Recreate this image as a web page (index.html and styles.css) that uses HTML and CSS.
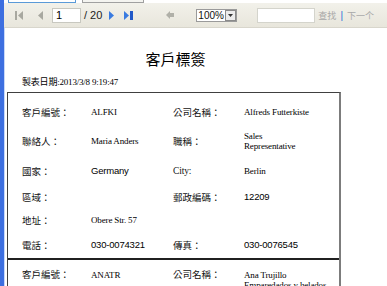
FILE: index.html
```html
<!DOCTYPE html>
<html lang="zh-TW">
<head>
    <meta charset="UTF-8">
    <title>客戶標簽</title>
    <link rel="stylesheet" href="styles.css">
</head>
<body>
    <div class="frame">
        <div class="tabs">
            <div class="tab tab-active"></div>
            <div class="tab"></div>
        </div>
        <div class="toolbar">
            <svg class="tb-icon first" width="8" height="9" viewBox="0 0 8 9"><rect x="0" y="0" width="2" height="9" fill="#a8a8a0"/><path d="M8 0 L3 4.5 L8 9 Z" fill="#a8a8a0"/></svg>
            <svg class="tb-icon prev" width="5" height="9" viewBox="0 0 5 9"><path d="M5 0 L0 4.5 L5 9 Z" fill="#a8a8a0"/></svg>
            <input class="page-input" type="text" value="1">
            <span class="page-total">/ 20</span>
            <svg class="tb-icon next" width="5" height="9" viewBox="0 0 5 9"><path d="M0 0 L5 4.5 L0 9 Z" fill="#3a7be0"/></svg>
            <svg class="tb-icon last" width="9" height="9" viewBox="0 0 9 9"><path d="M0 0 L5 4.5 L0 9 Z" fill="#3a7be0"/><rect x="6" y="0" width="3" height="9" fill="#2058c8"/></svg>
            <svg class="tb-icon back" width="8" height="8" viewBox="0 0 8 8"><path d="M0 4 L4 0 L4 2 L8 2 L8 6 L4 6 L4 8 Z" fill="#b0b0a8"/></svg>
            <div class="zoom-select">
                <span class="zoom-value">100%</span>
                <span class="zoom-btn"><svg width="5" height="3" viewBox="0 0 5 3"><path d="M0 0 L5 0 L2.5 3 Z" fill="#333"/></svg></span>
            </div>
            <input class="search-input" type="text">
            <span class="find">查找</span>
            <span class="sep">|</span>
            <span class="find">下一个</span>
        </div>
        <div class="content">
            <h1 class="title">客戶標簽</h1>
            <div class="date">製表日期:2013/3/8 9:19:47</div>
            <div class="report">
                <div class="record">
                    <div class="row r1">
                        <div class="label">客戶編號：</div>
                        <div class="val serif">ALFKI</div>
                        <div class="label">公司名稱：</div>
                        <div class="val serif">Alfreds Futterkiste</div>
                    </div>
                    <div class="row r2">
                        <div class="label">聯絡人：</div>
                        <div class="val serif">Maria Anders</div>
                        <div class="label">職稱：</div>
                        <div class="val serif">Sales<br>Representative</div>
                    </div>
                    <div class="row r3">
                        <div class="label">國家：</div>
                        <div class="val sans">Germany</div>
                        <div class="label serif">City:</div>
                        <div class="val serif">Berlin</div>
                    </div>
                    <div class="row r4">
                        <div class="label">區域：</div>
                        <div class="val"></div>
                        <div class="label">郵政編碼：</div>
                        <div class="val sans">12209</div>
                    </div>
                    <div class="row r5">
                        <div class="label">地址：</div>
                        <div class="val serif">Obere Str. 57</div>
                        <div class="label"></div>
                        <div class="val"></div>
                    </div>
                    <div class="row r6">
                        <div class="label">電話：</div>
                        <div class="val sans">030-0074321</div>
                        <div class="label">傳真：</div>
                        <div class="val sans">030-0076545</div>
                    </div>
                </div>
                <div class="record">
                    <div class="row r1b">
                        <div class="label">客戶編號：</div>
                        <div class="val serif">ANATR</div>
                        <div class="label">公司名稱：</div>
                        <div class="val serif">Ana Trujillo<br>Emparedados y helados</div>
                    </div>
                </div>
            </div>
        </div>
    </div>
</body>
</html>
```

FILE: styles.css
```css
* {
    margin: 0;
    padding: 0;
    box-sizing: border-box;
}

html, body {
    height: 100%;
    overflow: hidden;
}

body {
    background: #fff;
    font-family: "Liberation Sans", "Noto Sans CJK TC", sans-serif;
    color: #000;
}

.frame {
    height: 100%;
    border-left: 4px solid #3d6fe0;
    box-shadow: inset 1px 0 0 #c8d8f8;
}

.tabs {
    height: 3px;
    display: flex;
    gap: 6px;
    padding-left: 4px;
    background: #fff;
}

.tab {
    width: 64px;
    height: 3px;
    border: 1px solid #a0a0a0;
    border-top: none;
    background: #f4f4f0;
}

.tab-active {
    width: 68px;
    border-color: #5a9ad8;
    background: #fff;
}

.tab + .tab {
    width: 62px;
}

.toolbar {
    height: 25px;
    display: flex;
    align-items: center;
    padding-left: 11px;
    background: linear-gradient(to bottom, #f2f1ea, #e8e6dc);
    border-bottom: 1px solid #d8d6cc;
    font-size: 11px;
}

.tb-icon {
    flex: none;
}

.first {
    margin-top: 1px;
}

.prev {
    margin-left: 15px;
}

.page-input {
    margin-left: 9px;
    width: 29px;
    height: 15px;
    border: 1px solid #c8c8c0;
    font-family: "Liberation Sans", sans-serif;
    font-size: 11px;
    padding-left: 3px;
    color: #000;
}

.page-total {
    margin-left: 3px;
    color: #222;
}

.next {
    margin-left: 7px;
}

.last {
    margin-left: 10px;
}

.back {
    margin-left: 33px;
}

.zoom-select {
    margin-left: 22px;
    width: 41px;
    height: 13px;
    border: 1px solid #9a9a9a;
    background: #fff;
    display: flex;
    align-items: center;
}

.zoom-value {
    flex: 1;
    font-size: 10px;
    padding-left: 1px;
    color: #111;
}

.zoom-btn {
    width: 11px;
    height: 11px;
    border: 1px solid #8a8a8a;
    background: #ececec;
    display: flex;
    align-items: center;
    justify-content: center;
}

.search-input {
    margin-left: 20px;
    width: 58px;
    height: 15px;
    border: 1px solid #d4d4cc;
    background: #fff;
}

.find {
    color: #a8a8a8;
    font-size: 9px;
    font-family: "Noto Sans CJK SC", sans-serif;
}

.search-input + .find {
    margin-left: 3px;
}

.sep {
    color: #3070d8;
    margin: 0 4px;
    font-size: 10px;
}

.content {
    padding-left: 3px;
}

.title {
    margin-top: 22px;
    text-align: center;
    width: 337px;
    font-size: 15px;
    font-weight: normal;
    font-family: "Noto Sans CJK TC", sans-serif;
    line-height: 18px;
    color: #000;
}

.date {
    margin-top: 8px;
    padding-left: 15px;
    font-size: 9px;
    line-height: 12px;
    font-family: "Liberation Serif", "Noto Sans CJK TC", serif;
    letter-spacing: -0.2px;
}

.report {
    margin-top: 4px;
    width: 334px;
    border-top: 1px solid #404040;
    border-left: 1px solid #404040;
    border-right: 2px solid #7c7c7c;
}

.record {
    padding-top: 5px;
    border-bottom: 2px solid #202020;
}

.row {
    display: grid;
    grid-template-columns: 69px 82px 71px 1fr;
    align-items: center;
    padding-left: 14px;
    font-size: 10px;
}

.r1 { height: 28px; }
.r2 { height: 30px; }
.r3 { height: 30px; }
.r4 { height: 22px; }
.r5 { height: 24px; }
.r6 { height: 26px; }
.r1b { height: 30px; align-items: start; padding-top: 2px; }

.label {
    font-family: "Noto Sans CJK TC", sans-serif;
    font-size: 9.5px;
    color: #111;
}

.val {
    line-height: 10px;
}

.serif {
    font-family: "Liberation Serif", serif;
    font-size: 9px;
    letter-spacing: -0.15px;
}

.label.serif {
    font-family: "Liberation Serif", serif;
    font-size: 9.5px;
}

.r1b .val {
    margin-top: 3px;
}

.sans {
    font-family: "Liberation Sans", sans-serif;
    font-size: 9.5px;
    letter-spacing: -0.2px;
}
```
